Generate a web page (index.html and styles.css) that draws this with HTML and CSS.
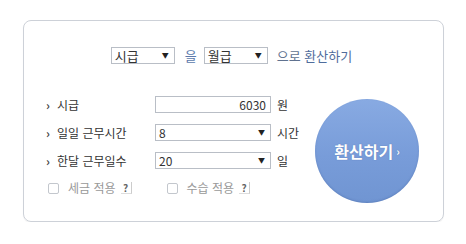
FILE: index.html
```html
<!DOCTYPE html>
<html lang="ko">
<head>
  <meta charset="UTF-8" />
  <meta name="viewport" content="width=device-width, initial-scale=1.0" />
  <title>급여 환산</title>
  <link rel="stylesheet" href="styles.css">
</head>
<body>
  <div class="converter">
    <div class="top-row">
      <div class="select select-small"><span>시급</span><span class="arrow">▼</span></div>
      <span class="joiner">을</span>
      <div class="select select-small"><span>월급</span><span class="arrow">▼</span></div>
      <span class="joiner-end">으로 <span class="strong">환산하기</span></span>
    </div>

    <div class="converter-body">
      <div class="fields">
        <div class="form-row">
          <span class="label">시급</span>
          <div class="field field-input">6030</div>
          <span class="unit">원</span>
        </div>
        <div class="form-row">
          <span class="label">일일 근무시간</span>
          <div class="field select"><span>8</span><span class="arrow">▼</span></div>
          <span class="unit">시간</span>
        </div>
        <div class="form-row">
          <span class="label">한달 근무일수</span>
          <div class="field select"><span>20</span><span class="arrow">▼</span></div>
          <span class="unit">일</span>
        </div>
        <div class="check-row">
          <label class="check"><span class="box"></span>세금 적용<span class="help">?</span></label>
          <label class="check"><span class="box"></span>수습 적용<span class="help">?</span></label>
        </div>
      </div>
      <div class="go-button">환산하기<span class="go-arrow">›</span></div>
    </div>
  </div>
</body>
</html>
```

FILE: styles.css
```css
body {
  margin: 0;
  padding: 20px 0 0 23px;
  background-color: #fff;
  font-family: "Noto Sans CJK KR", "Noto Sans", sans-serif;
  font-size: 12px;
  color: #333;
}
.converter {
  width: 419px;
  border: 1px solid #cdd1d8;
  border-radius: 8px;
  padding: 26px 0 18px;
  box-shadow: 0 1px 1px rgba(0, 0, 0, 0.06);
}
.top-row {
  display: flex;
  align-items: center;
  justify-content: center;
  padding-right: 4px;
  line-height: 17px;
}
.select {
  display: flex;
  align-items: center;
  justify-content: space-between;
  box-sizing: border-box;
  height: 17px;
  padding: 0 5px 0 3px;
  border: 1px solid #b9bec6;
  background: #fff;
  color: #333;
  line-height: 15px;
}
.select-small {
  width: 64px;
  font-size: 13px;
}
.arrow {
  font-size: 7px;
  color: #222;
}
.joiner {
  margin: 0 7px 0 10px;
  font-size: 13px;
  color: #5b79ab;
}
.joiner-end {
  margin-left: 9px;
  font-size: 13px;
  color: #60728f;
}
.strong {
  color: #4f6c9c;
}
.converter-body {
  display: flex;
  margin-top: 32px;
  padding-left: 22px;
}
.fields {
  width: 255px;
}
.form-row {
  display: flex;
  align-items: center;
  height: 17px;
  margin-bottom: 11px;
  line-height: 17px;
}
.label {
  width: 109px;
}
.label::before {
  content: "›";
  display: inline-block;
  width: 11px;
  font-weight: bold;
  color: #444;
}
.field {
  width: 116px;
  height: 17px;
  box-sizing: border-box;
  border: 1px solid #b9bec6;
}
.field-input {
  text-align: right;
  padding-right: 4px;
  line-height: 15px;
}
.unit {
  margin-left: 6px;
}
.check-row {
  display: flex;
  align-items: center;
  height: 16px;
  padding-left: 2px;
  color: #999;
  line-height: 16px;
}
.check {
  display: flex;
  align-items: center;
  margin-right: 35px;
}
.box {
  width: 9px;
  height: 9px;
  margin-right: 9px;
  border: 1px solid #c3c7cd;
  border-radius: 2px;
}
.help {
  display: inline-block;
  width: 10px;
  height: 11px;
  margin-left: 5px;
  border-right: 1px solid #ccc;
  border-bottom: 1px solid #ddd;
  font-size: 10px;
  font-weight: bold;
  line-height: 11px;
  text-align: center;
  color: #666;
}
.go-button {
  display: flex;
  align-items: center;
  justify-content: center;
  width: 104px;
  height: 104px;
  margin: 3px 0 0 14px;
  border-radius: 50%;
  background: linear-gradient(#88aae2, #789cd9 55%, #7095d2);
  box-shadow: inset 0 -1px 2px rgba(60, 90, 150, 0.3);
  color: #fff;
  font-size: 16px;
  font-weight: bold;
  text-shadow: 0 0 1px rgba(40, 70, 130, 0.5);
}
.go-arrow {
  margin-left: 3px;
  font-size: 11px;
}
```
